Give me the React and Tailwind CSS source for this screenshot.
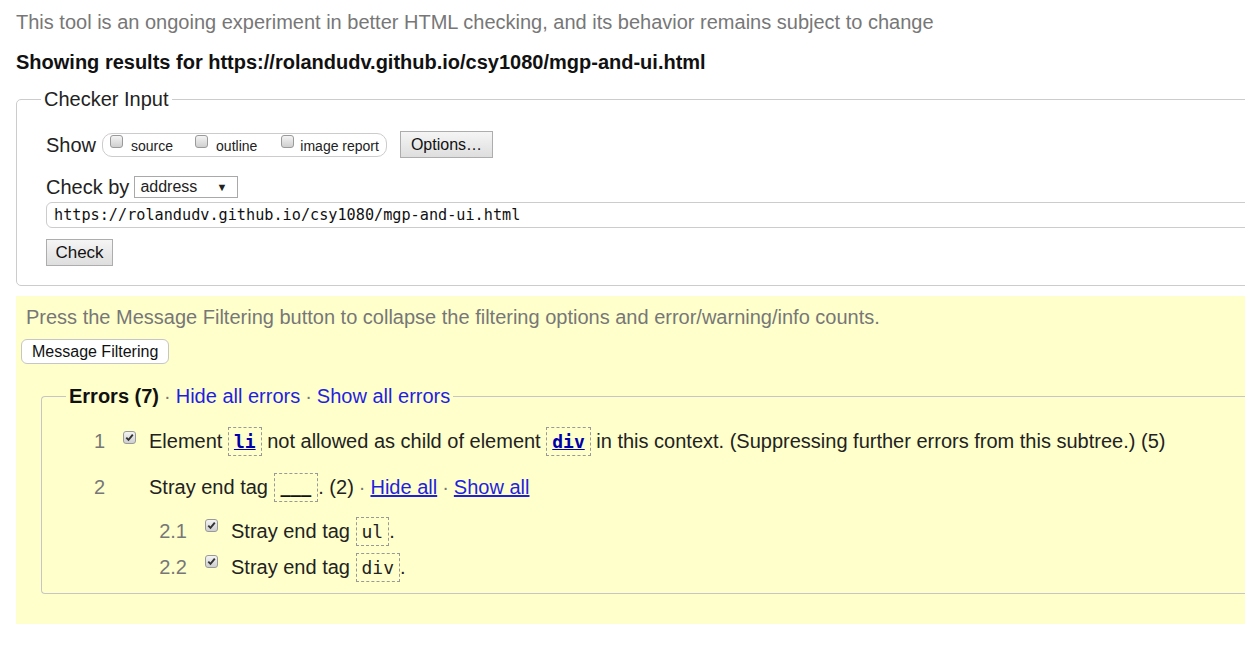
import React from 'react';

const Box = ({ checked }) => (
  <span className="flex w-[13px] h-[13px] shrink-0 items-center justify-center rounded-[3px] border border-[#9a9a9a] bg-gradient-to-b from-[#f4f4f4] to-[#cfcfcf]">
    {checked && (
      <svg width="9" height="9" viewBox="0 0 9 9">
        <path d="M1.3 4.6 L3.5 6.9 L7.8 1.6" fill="none" stroke="#333" strokeWidth="1.9" />
      </svg>
    )}
  </span>
);

const Code = ({ children, link }) => (
  <span className="block px-[5px] border border-dashed border-[#999] leading-[27px] font-['DejaVu_Sans_Mono',monospace] text-[18px]">
    {link ? (
      <span className="font-bold underline text-[#0000aa]">{children}</span>
    ) : (
      <span className="text-[#222]">{children}</span>
    )}
  </span>
);

const Dot = () => <span className="text-[#777] mx-[5px]">·</span>;

export default function App() {
  return (
    <div className="w-[1245px] h-[656px] overflow-hidden bg-white font-['Liberation_Sans',Arial,sans-serif]">
      <div className="w-[1320px] pl-4 pt-[10px]">
        <p className="text-[20px] leading-[24px] text-[#777]">
          This tool is an ongoing experiment in better HTML checking, and its behavior remains subject to change
        </p>
        <p className="mt-4 text-[20px] leading-[24px] font-bold text-[#111]">
          Showing results for https://rolandudv.github.io/csy1080/mgp-and-ui.html
        </p>

        <fieldset className="mt-[13px] border border-[#ccc] rounded-[5px] pl-[29px] pb-[19px]">
          <legend className="-ml-[5px] px-[3px] text-[20px] leading-[24px] text-[#222]">Checker Input</legend>

          <div className="mt-[20px] flex items-center h-[27px] text-[#222]">
            <span className="text-[20px]">Show</span>
            <div className="ml-[6px] flex items-start h-[24px] px-[7px] pt-[1px] border border-[#ccc] rounded-[10px] text-[14px]">
              <Box />
              <span className="ml-[8px] mt-[1px]">source</span>
              <span className="flex ml-[22px]"><Box /></span>
              <span className="ml-[8px] mt-[1px]">outline</span>
              <span className="flex ml-[24px]"><Box /></span>
              <span className="ml-[6px] mt-[1px]">image report</span>
            </div>
            <button className="ml-[13px] h-[27px] px-[10px] border border-[#adadad] bg-gradient-to-b from-[#f5f5f5] to-[#dedede] text-[16px] text-[#111]">
              Options…
            </button>
          </div>

          <div className="mt-[18px] flex items-center h-[22px] text-[#222]">
            <span className="text-[20px]">Check by</span>
            <div className="ml-[5px] flex items-center justify-between w-[104px] h-[22px] pl-[5px] pr-[10px] border border-[#a9a9a9] bg-white text-[16px]">
              <span>address</span>
              <span className="text-[11px]">▼</span>
            </div>
          </div>

          <div className="mt-[4px] h-[26px] flex items-center pl-[7px] border border-[#ccc] rounded-[6px] font-['DejaVu_Sans_Mono',monospace] text-[15.2px] text-[#111]">
            https://rolandudv.github.io/csy1080/mgp-and-ui.html
          </div>

          <button className="mt-[11px] h-[27px] w-[67px] border border-[#adadad] bg-gradient-to-b from-[#f5f5f5] to-[#dedede] text-[17px] text-[#111]">
            Check
          </button>
        </fieldset>

        <div className="mt-[10px] bg-[#ffffcc] pt-[9px] pb-[30px]">
          <p className="pl-[10px] text-[20px] leading-[24px] text-[#777]">
            Press the Message Filtering button to collapse the filtering options and error/warning/info counts.
          </p>
          <button className="ml-[5px] mt-[10px] h-[25px] px-[10px] bg-white border border-[#c6c6c6] rounded-[6px] text-[16px] text-[#111]">
            Message Filtering
          </button>

          <fieldset className="mt-[20px] ml-[25px] border border-[#c6c6c6] border-r-0 rounded-l-[4px] pb-[11px]">
            <legend className="ml-[24px] px-[3px] text-[20px] leading-[24px]">
              <span className="font-bold text-[#111]">Errors (7)</span>
              <Dot />
              <span className="text-[#1f1fe0]">Hide all errors</span>
              <Dot />
              <span className="text-[#1f1fe0]">Show all errors</span>
            </legend>

            <div className="mt-[18px] flex items-center text-[20px] text-[#222]">
              <span className="w-[63px] text-right text-[#777]">1</span>
              <span className="flex ml-[18px] self-start mt-[5px]"><Box checked /></span>
              <span className="ml-[13px]">Element&nbsp;</span>
              <Code link>li</Code>
              <span>&nbsp;not allowed as child of element&nbsp;</span>
              <Code link>div</Code>
              <span>&nbsp;in this context. (Suppressing further errors from this subtree.) (5)</span>
            </div>

            <div className="mt-[16px] flex items-center text-[20px] text-[#222]">
              <span className="w-[63px] text-right text-[#777]">2</span>
              <span className="ml-[44px]">Stray end tag&nbsp;</span>
              <span className="block px-[6px] border border-dashed border-[#999] leading-[27px] font-['DejaVu_Sans_Mono',monospace] text-[17px] font-bold text-[#111]">___</span>
              <span>. (2)</span>
              <Dot />
              <span className="text-[#1f1fe0] underline">Hide all</span>
              <Dot />
              <span className="text-[#1f1fe0] underline">Show all</span>
            </div>

            <div className="mt-[14px] flex items-center text-[20px] text-[#222]">
              <span className="w-[145px] text-right text-[#777]">2.1</span>
              <span className="flex ml-[18px] self-start mt-[3px]"><Box checked /></span>
              <span className="ml-[13px]">Stray end tag&nbsp;</span>
              <Code>ul</Code>
              <span>.</span>
            </div>

            <div className="mt-[6px] flex items-center text-[20px] text-[#222]">
              <span className="w-[145px] text-right text-[#777]">2.2</span>
              <span className="flex ml-[18px] self-start mt-[3px]"><Box checked /></span>
              <span className="ml-[13px]">Stray end tag&nbsp;</span>
              <Code>div</Code>
              <span>.</span>
            </div>
          </fieldset>
        </div>
      </div>
    </div>
  );
}
